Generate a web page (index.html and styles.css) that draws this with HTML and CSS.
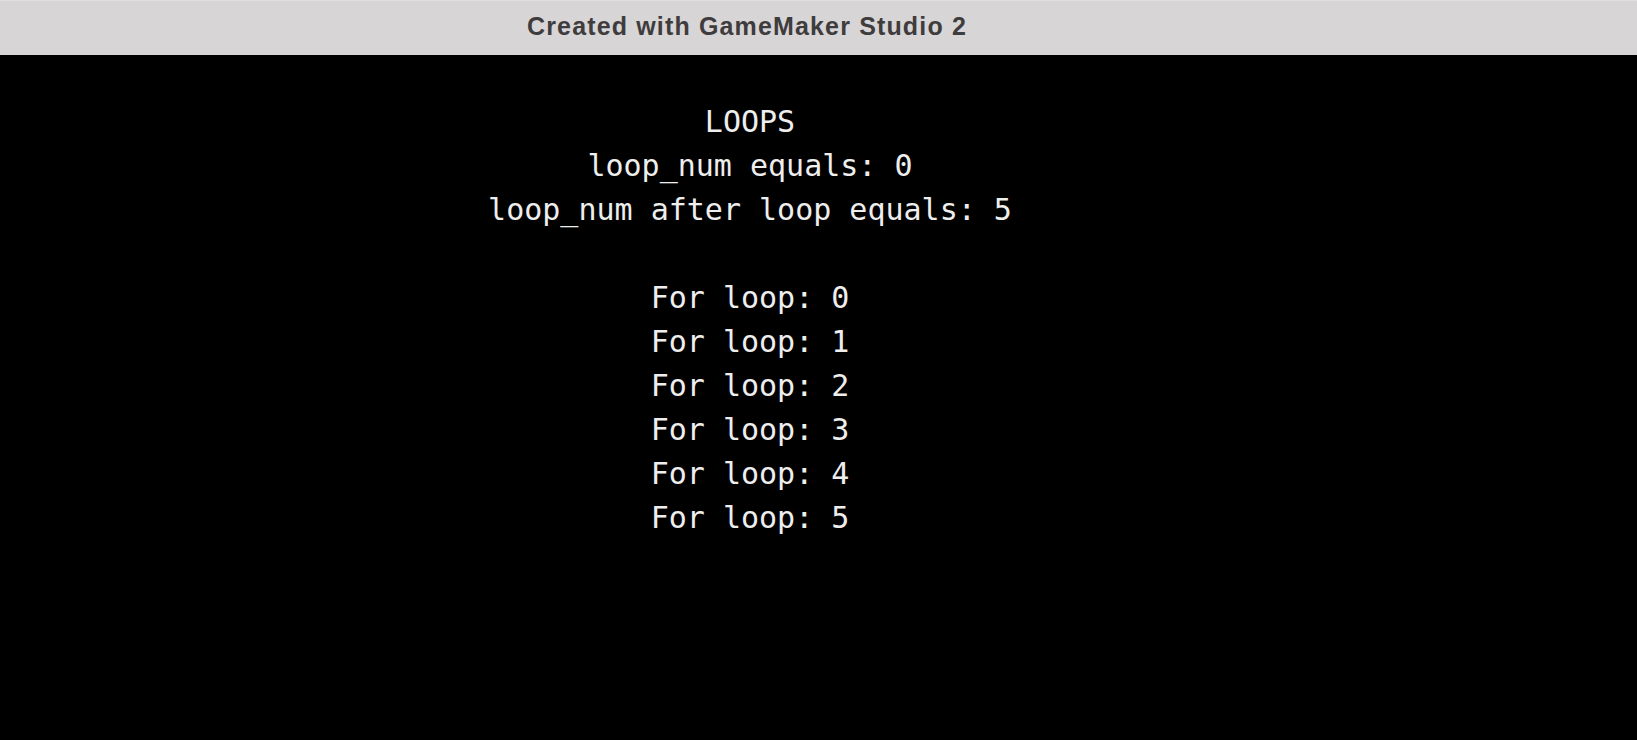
FILE: index.html
```html
<!DOCTYPE html>
<html lang="en">
<head>
<meta charset="utf-8">
<title>Created with GameMaker Studio 2</title>
<link rel="stylesheet" href="styles.css">
</head>
<body>
  <header class="titlebar">
    <div class="title">Created with GameMaker Studio 2</div>
  </header>
  <main class="game">
    <div class="lines">
      <div class="line">LOOPS</div>
      <div class="line">loop_num equals: 0</div>
      <div class="line">loop_num after loop equals: 5</div>
      <div class="line blank"></div>
      <div class="line">For loop: 0</div>
      <div class="line">For loop: 1</div>
      <div class="line">For loop: 2</div>
      <div class="line">For loop: 3</div>
      <div class="line">For loop: 4</div>
      <div class="line">For loop: 5</div>
    </div>
  </main>
</body>
</html>
```

FILE: styles.css
```css
html, body {
  margin: 0;
  padding: 0;
  height: 100%;
  background: #000;
}

body {
  display: flex;
  flex-direction: column;
  overflow: hidden;
}

.titlebar {
  height: 55px;
  box-sizing: border-box;
  background: #d8d5d6;
  border-top: 1px solid #e2dfe0;
  flex: 0 0 auto;
}

.title {
  width: 1494px;
  text-align: center;
  font-family: "Liberation Sans", Arial, sans-serif;
  font-weight: bold;
  font-size: 25px;
  letter-spacing: 1.15px;
  line-height: 50px;
  color: #3e3c3d;
}

.game {
  flex: 1 1 auto;
  background: #000;
  padding-top: 45px;
}

.lines {
  width: 1500px;
  display: flex;
  flex-direction: column;
  align-items: center;
}

.line {
  font-family: "DejaVu Sans Mono", "Liberation Mono", monospace;
  font-size: 30px;
  line-height: 44px;
  height: 44px;
  color: #eeeeee;
  white-space: pre;
}
```
